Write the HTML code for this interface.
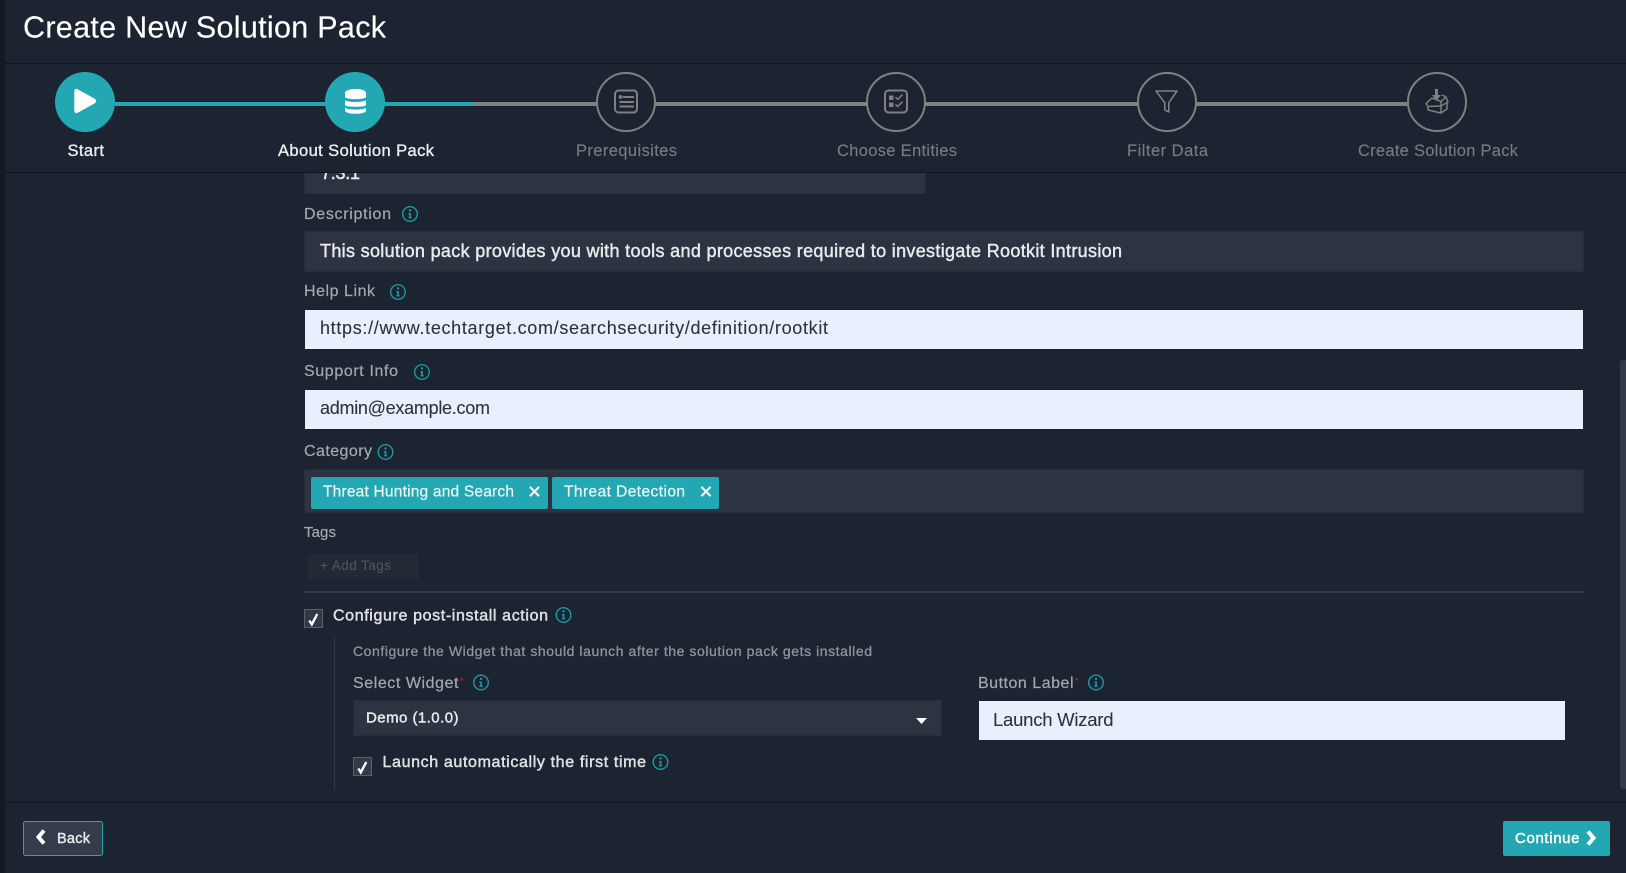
<!DOCTYPE html>
<html><head><meta charset="utf-8"><title>Create New Solution Pack</title>
<style>
html,body{margin:0;padding:0;background:#1d2431;overflow:hidden}
svg{display:block;position:absolute;left:0;top:0}
text{font-family:"Liberation Sans",sans-serif;fill:#a5a9ae;font-size:16px;stroke:#a5a9ae;stroke-width:.2}
.w{fill:#e9eaec;stroke:#e9eaec}
.step{font-size:16.500px;fill:#eceded;stroke:#eceded;stroke-width:.35}
.g{font-size:16.500px;fill:#767b81;stroke:#767b81;stroke-width:.15}
.dark{fill:#2c3340;stroke:#2c3340;stroke-width:.1;font-size:18px}
.b{stroke-width:.45}
</style></head><body>
<svg width="1626" height="873" viewBox="0 0 1626 873" xmlns="http://www.w3.org/2000/svg">
<defs>
<g id="i"><circle r="7.3" fill="none" stroke="#1a98a4" stroke-width="1.4"/><circle cy="-3.6" r="1.2" fill="#1a98a4"/><path d="M-1.6-1H.9V3.2H1.8V4.4H-1.8V3.2H-.8V.2H-1.6Z" fill="#1a98a4"/></g>
<g id="x"><path d="M-4.6-4.6L4.600 4.600M4.600-4.600L-4.600 4.600" stroke="#f2f7f8" stroke-width="2.100" fill="none"/></g>
<g id="chk"><path d="M-4.200 1.500L-1.700 5.400L3.800-5" stroke="#fff" stroke-width="2.400" fill="none"/></g>
</defs>
<rect width="1626" height="873" fill="#1d2431"/>

<!-- version input (clipped) -->
<rect x="304" y="160" width="622" height="34" fill="#262c38"/>
<rect x="305" y="160" width="620" height="33" fill="#2c3341"/>
<text x="321" y="179" class="w b" style="font-size:18px" textLength="39">7.3.1</text>

<!-- header -->
<rect x="0" y="0" width="1626" height="172" fill="#1d2431"/>
<rect x="5" y="63" width="1621" height="1" fill="#10151c"/>
<rect x="5" y="172" width="1621" height="1" fill="#10151c"/>
<text x="23" y="37.500" style="font-size:30.500px;fill:#fff;stroke:#fff;stroke-width:.15" textLength="363">Create New Solution Pack</text>

<!-- stepper -->
<rect x="115" y="102" width="1293" height="4" fill="#808080"/>
<rect x="115" y="102" width="359" height="4" fill="#23a8b3"/>
<circle cx="85" cy="102" r="30" fill="#23a8b3"/>
<circle cx="355" cy="102" r="30" fill="#23a8b3"/>
<path d="M74.800 91.500Q74.800 88.400 77.700 89.900L94.600 99.200Q96.800 101 94.600 102.800L77.700 112.200Q74.800 113.600 74.800 110.500Z" fill="#fff" stroke="#fff" stroke-width="1"/>
<g fill="#fff">
<path d="M345 93C345 87.700 366 87.700 366 93V97C366 99.800 345 99.800 345 97Z"/>
<path d="M345 100.300C348 102.600 363 102.600 366 100.300V105C366 107.400 345 107.400 345 105Z"/>
<path d="M345 107.800C348 110.200 363 110.200 366 107.800V110.600C366 114.800 345 114.800 345 110.600Z"/>
</g>
<g fill="#1d2431" stroke="#808080" stroke-width="2">
<circle cx="626" cy="102" r="29"/><circle cx="896" cy="102" r="29"/><circle cx="1167" cy="102" r="29"/><circle cx="1437" cy="102" r="29"/>
</g>
<!-- prerequisites icon -->
<g fill="none" stroke="#808080" stroke-width="2">
<rect x="615" y="90.500" width="22" height="22" rx="3.500"/>
<path d="M623 97H634M619.500 102H634M619.500 106.500H634"/>
<circle cx="620.500" cy="97" r=".9" fill="#808080"/>
</g>
<!-- choose icon -->
<g fill="none" stroke="#808080" stroke-width="2">
<rect x="885" y="90.500" width="22" height="22" rx="3.500"/>
<path d="M895.500 97.300L897.800 99.300L902.500 94.500M895.500 104.500L897.800 106.500L902.500 101.700" stroke-width="1.500"/>
</g>
<rect x="889" y="95.500" width="4.500" height="4.500" fill="#808080"/><rect x="889" y="102.500" width="4.500" height="4.500" fill="#808080"/>
<!-- filter icon -->
<path d="M1156 91H1177L1168.800 102.800V112L1164.800 110V102.800Z" fill="none" stroke="#808080" stroke-width="1.600" stroke-linejoin="round"/>
<!-- box icon -->
<g fill="none" stroke="#808080" stroke-width="1.500" stroke-linejoin="round">
<path d="M1432 98L1426 103.500L1428 106.500L1441 106L1448 102L1446 97L1442 95"/>
<path d="M1432 98L1441 101.500L1441 113M1441 101.500L1446 97M1428 106.500V110L1441 113L1447 109V103"/>
</g>
<path d="M1435 89H1438V95H1441L1436.500 100.500L1432 95H1435Z" fill="#808080"/>
<text x="67.500" y="156" class="step" textLength="36.500">Start</text>
<text x="278" y="156" class="step" textLength="156">About Solution Pack</text>
<text x="576" y="156" class="g" textLength="101">Prerequisites</text>
<text x="837" y="156" class="g" textLength="120">Choose Entities</text>
<text x="1127" y="156" class="g" textLength="81">Filter Data</text>
<text x="1358" y="156" class="g" textLength="160">Create Solution Pack</text>

<!-- left strip -->
<rect x="0" y="0" width="5" height="873" fill="#141b23"/>

<!-- description -->
<text x="304" y="219" textLength="87">Description</text>
<use href="#i" x="410" y="214"/>
<rect x="304" y="231" width="1280" height="41" fill="#262c38"/>
<rect x="305" y="232" width="1278" height="39" fill="#2c3341"/>
<text x="320" y="257" class="w b" style="font-size:18px" textLength="802">This solution pack provides you with tools and processes required to investigate Rootkit Intrusion</text>

<!-- help link -->
<text x="304" y="296" textLength="71">Help Link</text>
<use href="#i" x="398" y="292"/>
<rect x="305" y="310" width="1278" height="39" fill="#e8f0fe"/>
<text x="320" y="334" class="dark" textLength="508">https://www.techtarget.com/searchsecurity/definition/rootkit</text>

<!-- support -->
<text x="304" y="376" textLength="94">Support Info</text>
<use href="#i" x="422" y="372"/>
<rect x="305" y="390" width="1278" height="39" fill="#e8f0fe"/>
<text x="320" y="414" class="dark" textLength="170">admin@example.com</text>

<!-- category -->
<text x="304" y="456" textLength="68">Category</text>
<use href="#i" x="385.500" y="452"/>
<rect x="304" y="469" width="1280" height="44" fill="#262c38"/>
<rect x="305" y="470" width="1278" height="42" fill="#2c3341"/>
<rect x="311" y="477" width="237" height="32" rx="2" fill="#23a8b3"/>
<rect x="552" y="477" width="167" height="32" rx="2" fill="#23a8b3"/>
<text x="323" y="496.500" style="font-size:15.500px;fill:#f0f7f8;stroke:#f0f7f8" textLength="191">Threat Hunting and Search</text>
<text x="564" y="496.500" style="font-size:15.500px;fill:#f0f7f8;stroke:#f0f7f8" textLength="121">Threat Detection</text>
<use href="#x" x="534.500" y="491.500"/>
<use href="#x" x="706" y="491.500"/>

<!-- tags -->
<text x="304" y="537" style="font-size:15px" textLength="32">Tags</text>
<rect x="308" y="554" width="111" height="25" rx="1" fill="#232a36"/>
<text x="320" y="570" style="font-size:13.500px;fill:#50565f;stroke:#50565f;stroke-width:.1" textLength="71">+ Add Tags</text>
<rect x="304" y="591" width="1281" height="2" fill="#333a47"/>

<!-- post install -->
<rect x="304.500" y="609.500" width="18" height="18" fill="#323947" stroke="#5b616b"/>
<use href="#chk" x="313.500" y="619"/>
<text x="333" y="620.500" style="font-size:16px;fill:#dfe1e3;stroke:#dfe1e3;stroke-width:.45" textLength="215">Configure post-install action</text>
<use href="#i" x="563.500" y="615"/>
<rect x="334" y="638" width="1" height="152" fill="#333a47"/>
<text x="353" y="656" style="font-size:14px;fill:#8f949a;stroke:#8f949a;stroke-width:.3" textLength="519">Configure the Widget that should launch after the solution pack gets installed</text>

<text x="353" y="688" textLength="105.500">Select Widget</text>
<text x="460" y="684" style="font-size:9px;fill:#b3313f;stroke:none">*</text>
<use href="#i" x="481" y="682.500"/>
<rect x="353" y="700" width="589" height="36" fill="#262c38"/>
<rect x="354" y="701" width="587" height="34" fill="#2c3341"/>
<text x="366" y="722.500" class="w b" style="font-size:15px" textLength="92.500">Demo (1.0.0)</text>
<path d="M916 718L927 718L921.500 724Z" fill="#fff"/>

<text x="978" y="688" textLength="95.500">Button Label</text>
<text x="1075" y="684" style="font-size:9px;fill:#b3313f;stroke:none">*</text>
<use href="#i" x="1096" y="682.500"/>
<rect x="979" y="701" width="586" height="39" fill="#e8f0fe"/>
<text x="993" y="726" class="dark" style="font-size:18.500px" textLength="120.500">Launch Wizard</text>

<rect x="353.500" y="757.500" width="18" height="18" fill="#323947" stroke="#5b616b"/>
<use href="#chk" x="362.500" y="767"/>
<text x="382.500" y="767" style="font-size:16px;fill:#dfe1e3;stroke:#dfe1e3;stroke-width:.45" textLength="263.500">Launch automatically the first time</text>
<use href="#i" x="660.500" y="762"/>

<!-- scrollbar -->
<rect x="1620" y="360" width="8" height="429" rx="3" fill="#333a47"/>

<!-- footer -->
<rect x="5" y="802" width="1621" height="71" fill="#1d2431"/>
<rect x="5" y="802" width="1621" height="1" fill="#10151c"/>
<rect x="23.500" y="821.500" width="79" height="34" rx="2" fill="#343c4b" stroke="#23a8b3"/>
<path d="M44 830.500L38.500 837L44 843.500" fill="none" stroke="#fff" stroke-width="4"/>
<text x="57" y="843" class="b" style="font-size:14.500px;fill:#e5e6e8;stroke:#e5e6e8" textLength="33">Back</text>
<rect x="1503" y="821" width="107" height="35" rx="2" fill="#23a8b3"/>
<text x="1515" y="843" class="b" style="font-size:15px;fill:#fff;stroke:#fff" textLength="64.500">Continue</text>
<path d="M1588 831.500L1593.500 838L1588 844.500" fill="none" stroke="#fff" stroke-width="4"/>
</svg>
</body></html>
